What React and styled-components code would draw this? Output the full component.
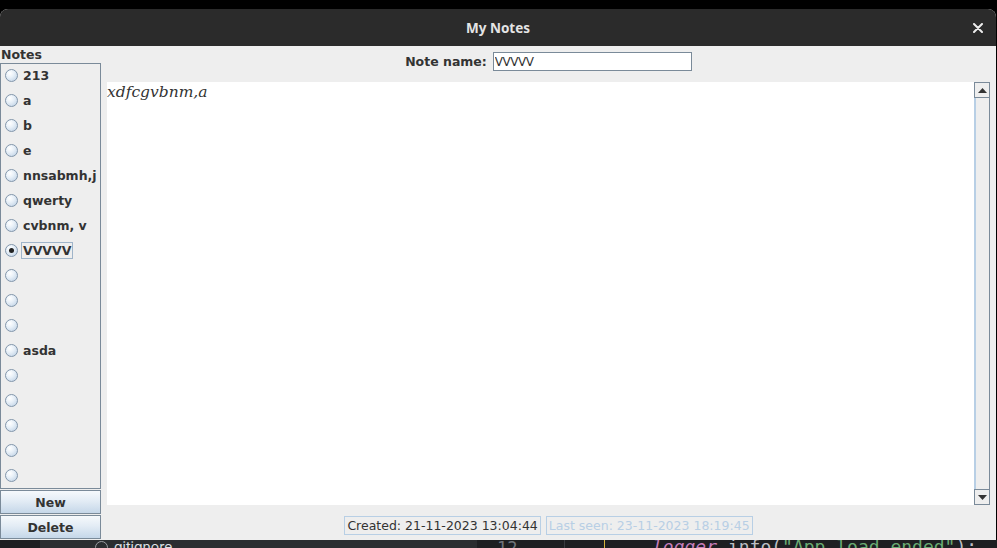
import React from 'react';
import styled, { createGlobalStyle } from 'styled-components';

const Global = createGlobalStyle`
  html, body { margin: 0; padding: 0; background: #000; }
  body { width: 997px; height: 548px; overflow: hidden; font-family: "DejaVu Sans", sans-serif; }
  * { box-sizing: border-box; }
`;

const Screen = styled.div`
  width: 997px;
  height: 548px;
  display: flex;
  flex-direction: column;
  background: #000;
  overflow: hidden;
`;

const TopGap = styled.div`
  height: 9px;
  flex: none;
`;

const Window = styled.div`
  width: 996px;
  height: 531px;
  flex: none;
  display: flex;
  flex-direction: column;
  border-radius: 8px 8px 0 0;
  overflow: hidden;
  background: #eeeeee;
`;

const TitleBar = styled.div`
  height: 37px;
  flex: none;
  background: #2b2b2b;
  display: grid;
  grid-template-columns: 1fr auto 1fr;
  align-items: center;
  color: #e4e4e4;
  font-family: "Noto Sans", sans-serif;
  font-weight: 700;
  font-size: 13.5px;
`;

const Title = styled.div`
  grid-column: 2;
`;

const CloseBtn = styled.div`
  grid-column: 3;
  justify-self: end;
  padding-right: 13px;
  display: flex;
  align-items: center;
`;

const Body = styled.div`
  flex: 1;
  display: flex;
  min-height: 0;
`;

const LeftCol = styled.div`
  width: 101px;
  flex: none;
  display: flex;
  flex-direction: column;
  gap: 1px;
  padding-bottom: 1px;
`;

const BoldLabel = styled.div`
  font-family: "DejaVu Sans", sans-serif;
  font-weight: 700;
  font-size: 12.5px;
  color: #333333;
`;

const NotesLabel = styled(BoldLabel)`
  height: 16px;
  line-height: 16px;
  padding-top: 1px;
  padding-left: 1px;
`;

const List = styled.div`
  flex: 1;
  border: 1px solid #7a8a99;
  overflow: hidden;
  display: flex;
  flex-direction: column;
`;

const Item = styled.div`
  height: 25px;
  flex: none;
  display: flex;
  align-items: center;
  padding-left: 4px;
  padding-bottom: 2px;
  gap: 3px;
`;

const Radio = styled.div`
  width: 13px;
  height: 13px;
  flex: none;
  border-radius: 50%;
  border: 1px solid #8296ab;
  background: radial-gradient(circle at 35% 30%, #ffffff 0%, #e8f0f8 40%, #b9cde2 100%);
  display: flex;
  align-items: center;
  justify-content: center;
  &::after {
    content: "";
    display: ${(p) => (p.$checked ? 'block' : 'none')};
    width: 5px;
    height: 5px;
    border-radius: 50%;
    background: #222;
  }
`;

const ItemText = styled(BoldLabel)`
  line-height: 15px;
  padding: 0 1px;
  border: 1px solid ${(p) => (p.$focused ? '#9fb4c9' : 'transparent')};
`;

const Button = styled.div`
  height: 24px;
  flex: none;
  border: 1px solid #7a8a99;
  background: linear-gradient(#f6f9fc 0%, #e3ecf5 45%, #c5d7e9 100%);
  display: flex;
  align-items: center;
  justify-content: center;
  font-weight: 700;
  font-size: 12.5px;
  color: #333333;
`;

const RightCol = styled.div`
  flex: 1;
  display: flex;
  flex-direction: column;
  min-width: 0;
`;

const Header = styled.div`
  height: 36px;
  flex: none;
  display: flex;
  align-items: flex-start;
  justify-content: center;
  padding-top: 6px;
  gap: 6px;
`;

const HeaderLabel = styled(BoldLabel)`
  line-height: 19px;
`;

const NameInput = styled.input`
  width: 199px;
  height: 19px;
  border: 1px solid #7a8a99;
  background: #ffffff;
  padding: 0 1px;
  font-family: "DejaVu Sans", sans-serif;
  font-size: 12px;
  letter-spacing: -0.5px;
  color: #333333;
  outline: none;
`;

const EditorRow = styled.div`
  flex: 1;
  display: flex;
  padding: 0 6px;
  min-height: 0;
`;

const Editor = styled.div`
  flex: 1;
  background: #ffffff;
  padding: 1px 0;
  font-family: "DejaVu Serif", serif;
  font-style: italic;
  font-size: 15.5px;
  line-height: 19px;
  color: #333333;
`;

const ScrollBar = styled.div`
  width: 16px;
  flex: none;
  display: flex;
  flex-direction: column;
  background: #eeeeee;
`;

const ArrowBtn = styled.div`
  height: 16px;
  flex: none;
  border: 1px solid #7a8a99;
  background: #eeeeee;
  display: flex;
  align-items: center;
  justify-content: center;
`;

const Track = styled.div`
  flex: 1;
  border-left: 2px solid #b8cfe5;
  border-right: 1px solid #7a8a99;
  background: #eeeeee;
`;

const StatusRow = styled.div`
  height: 35px;
  flex: none;
  display: flex;
  justify-content: center;
  align-items: flex-start;
  padding-top: 11px;
  gap: 5px;
`;

const StatusBox = styled.div`
  height: 19px;
  border: 1px solid #b8cfe5;
  padding: 0 2px;
  font-size: 12.5px;
  line-height: 17px;
  color: ${(p) => (p.$dim ? '#b8cfe5' : '#333333')};
  white-space: nowrap;
`;

const Desktop = styled.div`
  flex: 1;
  display: flex;
  background: #1e1f22;
  overflow: hidden;
`;

const SidePad = styled.div`
  width: 40px;
  flex: none;
  background: #1e1f22;
`;

const FilePanel = styled.div`
  width: 437px;
  flex: none;
  background: #2b2d30;
  display: flex;
  align-items: flex-start;
  padding-left: 55px;
  gap: 6px;
  font-family: "Inter", "DejaVu Sans", sans-serif;
  font-size: 14px;
  line-height: 14px;
  color: #dfe1e5;
`;

const FileIcon = styled.div`
  width: 13px;
  height: 13px;
  border-radius: 50%;
  border: 1px solid #9a9ca1;
  margin-top: 1px;
`;

const FileName = styled.div``;

const Gutter = styled.div`
  width: 88px;
  flex: none;
  display: flex;
  font-family: "DejaVu Sans Mono", monospace;
  font-size: 17px;
  line-height: 17px;
  color: #6f737a;
  padding-left: 20px;
  border-right: 1px solid #393b40;
`;

const GuideLine = styled.div`
  width: 40px;
  flex: none;
  border-right: 1px solid #d5b33b;
`;

const Code = styled.div`
  padding-left: 47px;
  font-family: "DejaVu Sans Mono", monospace;
  font-size: 18px;
  line-height: 18px;
  color: #bcbec4;
  white-space: nowrap;
  margin-top: -2px;
`;

const Tok = styled.span`
  color: ${(p) => p.$c};
  font-style: ${(p) => (p.$i ? 'italic' : 'normal')};
`;

const notes = [
  '213', 'a', 'b', 'e', 'nnsabmh,j', 'qwerty', 'cvbnm, v', 'VVVVV',
  '', '', '', 'asda', '', '', '', '', '',
];

export default function App() {
  return (
    <>
      <Global />
      <Screen>
        <TopGap />
        <Window>
          <TitleBar>
            <Title>My Notes</Title>
            <CloseBtn>
              <svg width="10" height="10" viewBox="0 0 10 10">
                <path d="M1 1 L9 9 M9 1 L1 9" stroke="#ececec" strokeWidth="2" strokeLinecap="round" />
              </svg>
            </CloseBtn>
          </TitleBar>
          <Body>
            <LeftCol>
              <NotesLabel>Notes</NotesLabel>
              <List>
                {notes.map((n, i) => (
                  <Item key={i}>
                    <Radio $checked={i === 7} />
                    <ItemText $focused={i === 7}>{n}</ItemText>
                  </Item>
                ))}
              </List>
              <Button>New</Button>
              <Button>Delete</Button>
            </LeftCol>
            <RightCol>
              <Header>
                <HeaderLabel>Note name:</HeaderLabel>
                <NameInput defaultValue="VVVVV" readOnly />
              </Header>
              <EditorRow>
                <Editor>xdfcgvbnm,a</Editor>
                <ScrollBar>
                  <ArrowBtn>
                    <svg width="9" height="5" viewBox="0 0 9 5"><path d="M0 5 L4.5 0 L9 5 Z" fill="#333" /></svg>
                  </ArrowBtn>
                  <Track />
                  <ArrowBtn>
                    <svg width="9" height="5" viewBox="0 0 9 5"><path d="M0 0 L9 0 L4.5 5 Z" fill="#333" /></svg>
                  </ArrowBtn>
                </ScrollBar>
              </EditorRow>
              <StatusRow>
                <StatusBox>Created: 21-11-2023 13:04:44</StatusBox>
                <StatusBox $dim>Last seen: 23-11-2023 18:19:45</StatusBox>
              </StatusRow>
            </RightCol>
          </Body>
        </Window>
        <Desktop>
          <SidePad />
          <FilePanel>
            <FileIcon />
            <FileName>gitignore</FileName>
          </FilePanel>
          <Gutter>12</Gutter>
          <GuideLine />
          <Code>
            <Tok $c="#c77dbb" $i>logger</Tok>.info(<Tok $c="#6aab73">"App load ended"</Tok>);
          </Code>
        </Desktop>
      </Screen>
    </>
  );
}
